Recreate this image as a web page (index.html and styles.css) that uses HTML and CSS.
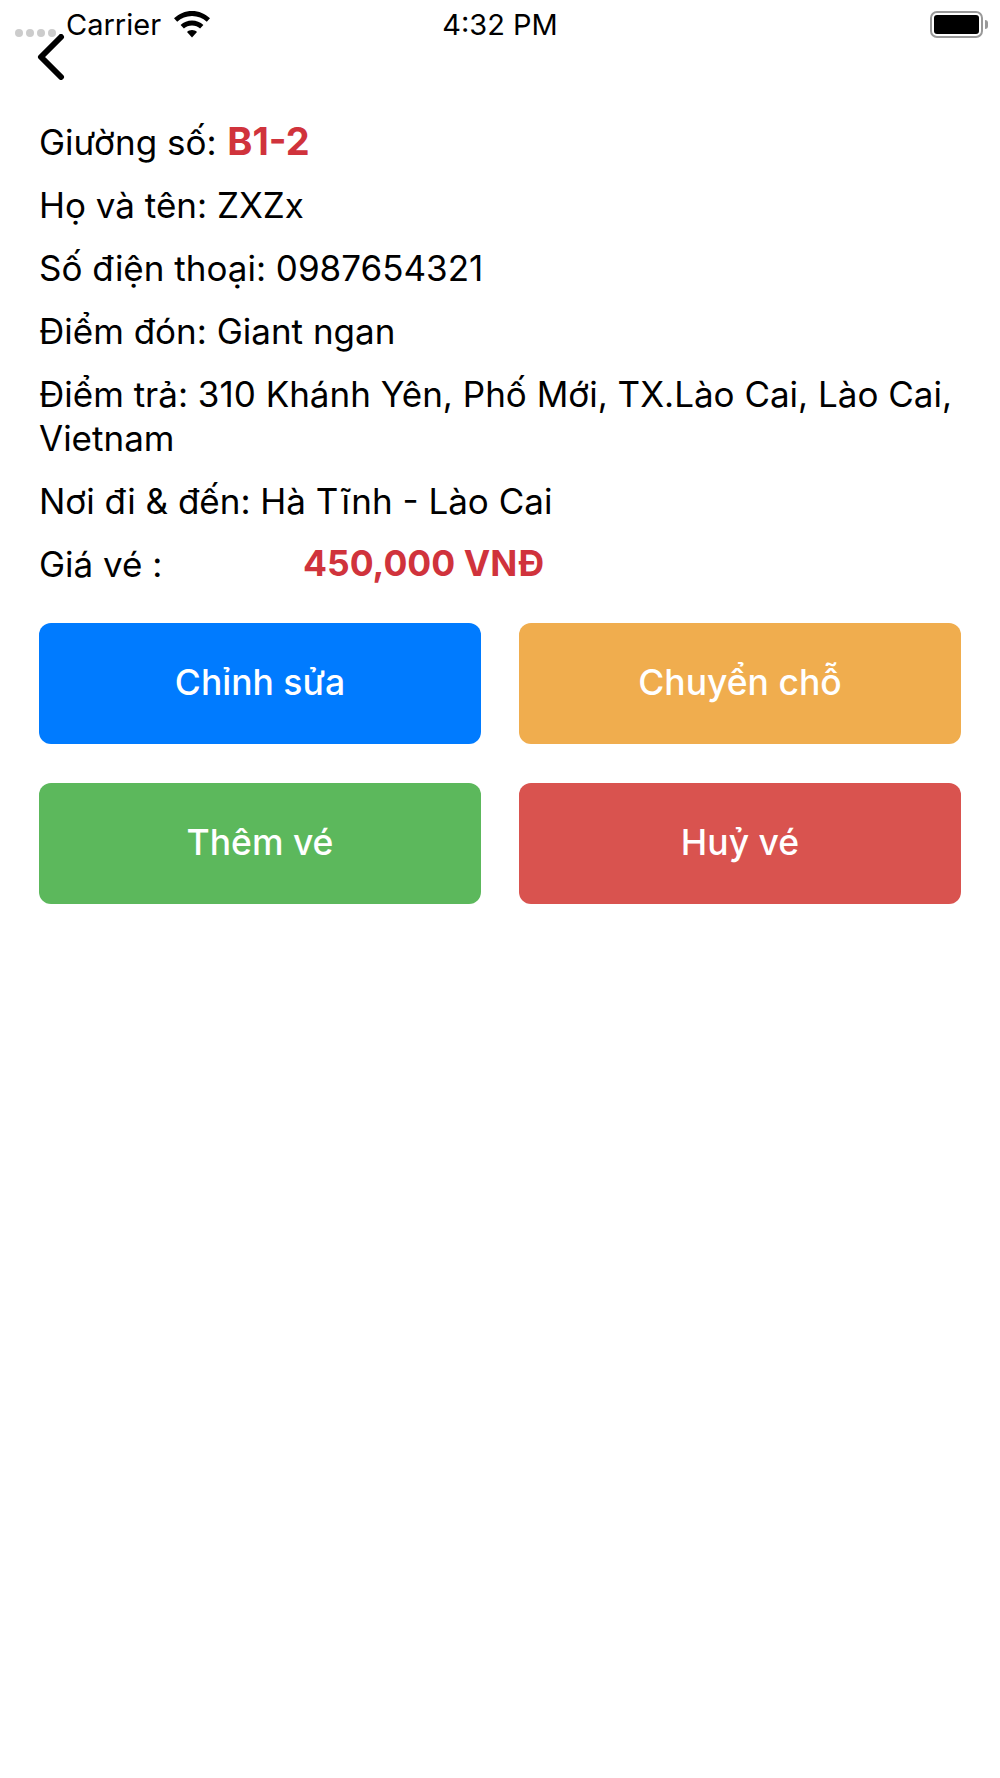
FILE: index.html
```html
<!DOCTYPE html>
<html lang="vi">
<head>
  <meta charset="UTF-8">
  <meta name="viewport" content="width=device-width, initial-scale=1.0">
  <title>Chi tiết vé</title>
  <link rel="stylesheet" href="styles.css">
</head>
<body>
  <div class="status-bar">
    <div class="signal-dots"><i></i><i></i><i></i><i></i></div>
    <div class="status-left">
      <span>Carrier</span>
      <svg class="wifi" width="36" height="27" viewBox="0 0 36 27">
        <path d="M18 0C11 0 5 2.700 0 7.300L3.200 10.800C7.200 7.100 12.300 5 18 5C23.700 5 28.800 7.100 32.800 10.800L36 7.300C31 2.700 25 0 18 0Z" fill="#000"/>
        <path d="M18 9.500C13.600 9.500 9.700 11.100 6.600 14L9.900 17.500C12 15.600 14.800 14.500 18 14.500C21.200 14.500 24 15.600 26.100 17.500L29.400 14C26.300 11.100 22.400 9.500 18 9.500Z" fill="#000"/>
        <path d="M18 19C16.100 19 14.400 19.700 13 20.900L18 26.500L23 20.900C21.600 19.700 19.900 19 18 19Z" fill="#000"/>
      </svg>
    </div>
    <div class="status-time">4:32 PM</div>
    <div class="status-right">
      <div class="battery"><div class="battery-fill"></div></div>
      <div class="battery-cap"></div>
    </div>
  </div>

  <div class="back-row">
    <svg width="28" height="46" viewBox="0 0 28 46">
      <path d="M24 3L4 23L24 43" fill="none" stroke="#000" stroke-width="6" stroke-linecap="round" stroke-linejoin="round"/>
    </svg>
  </div>

  <div class="info">
    <p>Giường số: <b class="red seat">B1-2</b></p>
    <p>Họ và tên: ZXZx</p>
    <p>Số điện thoại: 0987654321</p>
    <p>Điểm đón: Giant ngan</p>
    <p>Điểm trả: 310 Khánh Yên, Phố Mới, TX.Lào Cai, Lào Cai, Vietnam</p>
    <p>Nơi đi &amp; đến: Hà Tĩnh - Lào Cai</p>
    <div class="price-row">
      <span class="price-label">Giá vé :</span>
      <b class="red">450,000 VNĐ</b>
    </div>
  </div>

  <div class="actions">
    <button class="btn btn-blue">Chỉnh sửa</button>
    <button class="btn btn-orange">Chuyển chỗ</button>
    <button class="btn btn-green">Thêm vé</button>
    <button class="btn btn-red">Huỷ vé</button>
  </div>
</body>
</html>
```

FILE: styles.css
```css
body {
  margin: 0;
  background-color: white;
  font-family: Inter, "Liberation Sans", sans-serif;
  color: #000;
}

/* Status bar */
.status-bar {
  position: relative;
  display: flex;
  justify-content: space-between;
  align-items: center;
  height: 48px;
  padding: 0 12px 0 66px;
  font-size: 29px;
}

.status-left {
  display: flex;
  align-items: center;
  gap: 13px;
}

.status-time {
  position: absolute;
  left: 0;
  right: 0;
  text-align: center;
}

.status-right {
  display: flex;
  align-items: center;
  gap: 2px;
}

.signal-dots {
  position: absolute;
  left: 15px;
  top: 29px;
  display: flex;
  gap: 3px;
}

.signal-dots i {
  width: 8px;
  height: 8px;
  border-radius: 50%;
  background-color: #ccc;
}

.battery {
  width: 53px;
  height: 27px;
  box-sizing: border-box;
  border: 2px solid #999;
  border-radius: 7px;
  padding: 2px;
}

.battery-fill {
  height: 100%;
  background-color: #000;
  border-radius: 3px;
}

.battery-cap {
  width: 3px;
  height: 9px;
  background-color: #999;
  border-radius: 0 3px 3px 0;
}

/* Back arrow sits partly under the status bar */
.back-row {
  margin: -14px 0 0 37px;
  height: 46px;
}

.back-row svg {
  display: block;
}

/* Ticket info */
.info {
  padding: 39px 39px 0;
  font-size: 35px;
  line-height: 44px;
}

.info p {
  margin: 0 0 19px;
}

.red {
  color: #d0333c;
  font-weight: 700;
}

.seat {
  font-size: 38px;
  line-height: 44px;
  margin-left: 1px;
}

.price-row {
  display: flex;
}

.price-label {
  width: 264px;
}

.price-row .red {
  font-size: 35.500px;
}

/* Buttons */
.actions {
  display: grid;
  grid-template-columns: 442px 442px;
  column-gap: 38px;
  row-gap: 39px;
  padding: 37px 39px 0;
}

.btn {
  height: 121px;
  padding: 0 0 3px;
  border: none;
  border-radius: 12px;
  color: white;
  font-family: inherit;
  font-size: 35.500px;
  font-weight: 550;
}

.btn-blue {
  background-color: #007bff;
}

.btn-orange {
  background-color: #f0ad4e;
}

.btn-green {
  background-color: #5cb85c;
}

.btn-red {
  background-color: #d9534f;
}
```
